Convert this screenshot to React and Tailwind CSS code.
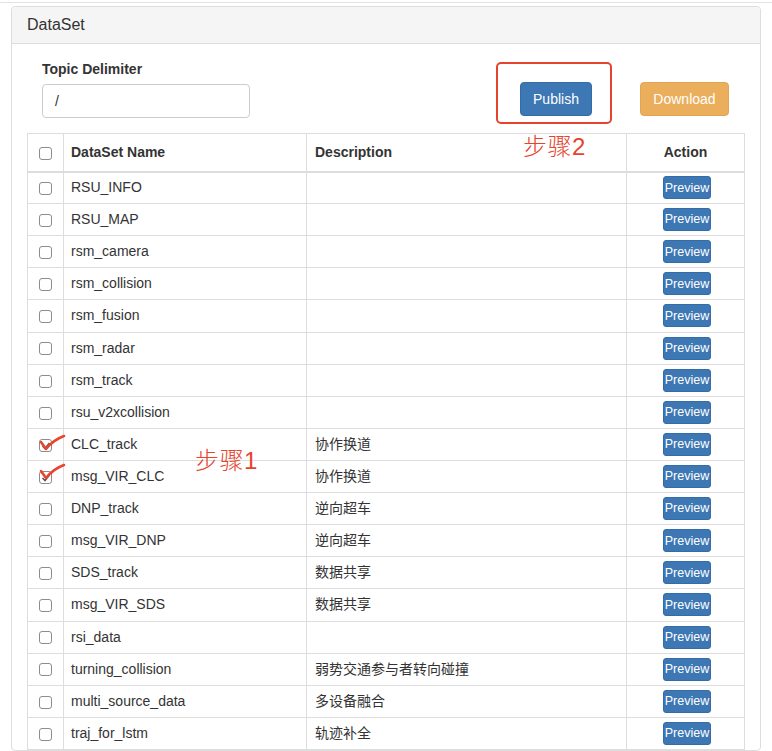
import React from 'react'

const rows = [
  ['RSU_INFO', ''],
  ['RSU_MAP', ''],
  ['rsm_camera', ''],
  ['rsm_collision', ''],
  ['rsm_fusion', ''],
  ['rsm_radar', ''],
  ['rsm_track', ''],
  ['rsu_v2xcollision', ''],
  ['CLC_track', '协作换道', true],
  ['msg_VIR_CLC', '协作换道', true],
  ['DNP_track', '逆向超车'],
  ['msg_VIR_DNP', '逆向超车'],
  ['SDS_track', '数据共享'],
  ['msg_VIR_SDS', '数据共享'],
  ['rsi_data', ''],
  ['turning_collision', '弱势交通参与者转向碰撞'],
  ['multi_source_data', '多设备融合'],
  ['traj_for_lstm', '轨迹补全'],
]

function Box({ checked }) {
  return (
    <span className="relative inline-block w-[13px] h-[13px] border border-[#8c8c8c] rounded-[3px] bg-white align-middle">
      {checked && (
        <svg className="absolute left-[1px] top-[1px]" width="10" height="10" viewBox="0 0 10 10">
          <path d="M1.5 5 L4 7.5 L8.5 2" fill="none" stroke="#555" strokeWidth="1.6" />
        </svg>
      )}
    </span>
  )
}

function Tick({ className }) {
  return (
    <svg className={'absolute ' + className} width="28" height="19" viewBox="0 0 28 19">
      <path d="M2 8 L7 15 Q14 6 25 2" fill="none" stroke="#e8442e" strokeWidth="2.6" strokeLinecap="round" strokeLinejoin="round" />
    </svg>
  )
}

export default function App() {
  return (
    <div className="relative w-[772px] min-h-[751px] bg-white text-[#333] font-['Liberation_Sans','Noto_Sans_CJK_SC',sans-serif] text-[14px] pt-[2px]">
      <div className="border-t border-[#e3e3e3] pt-[3px] px-[11px]">
        <div className="border border-[#ddd] rounded-[4px] bg-white">
          <div className="h-[37px] bg-[#f5f5f5] border-b border-[#ddd] rounded-t-[4px] px-[15px] flex items-center text-[16px]">
            DataSet
          </div>
          <div className="px-[15px] pt-[15px]">
            <div className="flex items-start">
              <div className="ml-[15px] w-[208px]">
                <div className="font-bold leading-[20px] h-[20px]">Topic Delimiter</div>
                <div className="mt-[5px] h-[34px] border border-[#ccc] rounded-[4px] px-[12px] flex items-center">/</div>
              </div>
              <button className="ml-[270px] mt-[23px] w-[72px] h-[34px] rounded-[4px] bg-[#3d77b4] border border-[#336ca6] text-white">
                Publish
              </button>
              <button className="ml-[48px] mt-[23px] w-[89px] h-[34px] rounded-[4px] bg-[#eaae5c] border border-[#e2a450] text-white">
                Download
              </button>
            </div>
            <table className="mt-[15px] w-[717px] table-fixed border-collapse border border-[#ddd]">
              <colgroup>
                <col className="w-[36px]" />
                <col className="w-[243px]" />
                <col className="w-[320px]" />
                <col className="w-[118px]" />
              </colgroup>
              <thead>
                <tr className="h-[38px] border-b-2 border-[#ddd]">
                  <th className="border-r border-[#ddd] text-center p-0"><Box /></th>
                  <th className="border-r border-[#ddd] text-left font-bold pl-[7px] pr-[8px]">DataSet Name</th>
                  <th className="border-r border-[#ddd] text-left font-bold px-[8px]">Description</th>
                  <th className="text-center font-bold">Action</th>
                </tr>
              </thead>
              <tbody>
                {rows.map(([name, desc, checked]) => (
                  <tr key={name} className="h-[32.12px] border-b border-[#ddd]">
                    <td className="border-r border-[#ddd] text-center p-0"><Box checked={checked} /></td>
                    <td className="border-r border-[#ddd] pl-[7px] pr-[8px] py-0">{name}</td>
                    <td className="border-r border-[#ddd] px-[8px] py-0">{desc}</td>
                    <td className="text-center p-0">
                      <button className="w-[48px] h-[23px] rounded-[3px] bg-[#3d77b4] border border-[#336ca6] text-white text-[12.5px] leading-none ml-[3px]">
                        Preview
                      </button>
                    </td>
                  </tr>
                ))}
              </tbody>
            </table>
          </div>
        </div>
      </div>

      <div className="absolute left-[496px] top-[62px] w-[116px] h-[62px] border-2 border-[#e5432e] rounded-[5px]" />
      <div className="absolute left-[523px] top-[133px] text-[24px] leading-[28px] text-[#e5432e] font-light tracking-[0.5px]">步骤2</div>
      <div className="absolute left-[195px] top-[447px] text-[24px] leading-[28px] text-[#e5432e] font-light tracking-[0.5px]">步骤1</div>
      <Tick className="left-[39px] top-[434px]" />
      <Tick className="left-[39px] top-[463px]" />
    </div>
  )
}
